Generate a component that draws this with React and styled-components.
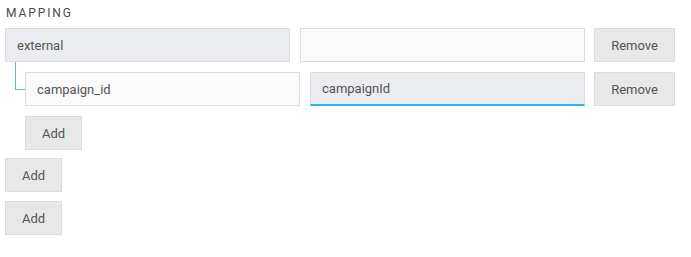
import React from 'react';
import styled, { createGlobalStyle } from 'styled-components';

const GlobalStyle = createGlobalStyle`
  body {
    margin: 0;
    background: #fff;
    font-family: Roboto, "Liberation Sans", Arial, sans-serif;
    color: #555;
  }
`;

const Page = styled.div`
  width: 670px;
  padding: 6px 0 0 5px;
`;

const Label = styled.div`
  font-size: 12px;
  line-height: 14px;
  font-weight: 400;
  letter-spacing: 1.9px;
  text-transform: uppercase;
  color: #4a4a4a;
  padding-left: 1px;
  margin-bottom: 8px;
`;

const List = styled.div`
  display: flex;
  flex-direction: column;
  gap: 10px;
`;

const Entry = styled.div`
  display: flex;
  flex-direction: column;
  gap: 10px;
`;

const Row = styled.div`
  display: flex;
  align-items: stretch;
`;

const Children = styled.div`
  display: flex;
  flex-direction: column;
  gap: 10px;
  padding-left: 20px;
`;

const Child = styled.div`
  position: relative;
`;

// tree connector from parent field down to the child field
const Connector = styled.span`
  position: absolute;
  left: -10px;
  top: -10px;
  width: 10px;
  height: 28px;
  border-left: 1px solid #6ab7b7;
  border-bottom: 1px solid #6ab7b7;
  box-sizing: border-box;
`;

const Field = styled.input`
  flex: 1;
  min-width: 0;
  height: 34px;
  box-sizing: border-box;
  margin: 0 10px 0 0;
  padding: 0 11px;
  font: 13px Roboto, "Liberation Sans", Arial, sans-serif;
  color: #555;
  background: ${(p) => (p.$filled ? '#ebecf0' : '#fafafa')};
  border: 1px solid #dcdcdc;
  border-bottom: ${(p) => (p.$active ? '2px solid #29b6f6' : '1px solid #dcdcdc')};
  border-radius: 0;
  outline: none;
  &:last-of-type {
    margin-right: 9px;
  }
`;

const Button = styled.button`
  width: ${(p) => p.$width || 57}px;
  height: 34px;
  box-sizing: border-box;
  padding: 0;
  font: 13px Roboto, "Liberation Sans", Arial, sans-serif;
  color: #555;
  background: #e8e8e8;
  border: 1px solid #dcdcdc;
  border-radius: 0;
  cursor: pointer;
  flex-shrink: 0;
  align-self: flex-start;
  margin-top: ${(p) => p.$top || 0}px;
`;

export default function App() {
  return (
    <>
      <GlobalStyle />
      <Page>
        <Label>Mapping</Label>
        <List>
          <Entry>
            <Row>
              <Field $filled defaultValue="external" />
              <Field defaultValue="" />
              <Button $width={81}>Remove</Button>
            </Row>
            <Children>
              <Child>
                <Connector />
                <Row>
                  <Field defaultValue="campaign_id" />
                  <Field $filled $active defaultValue="campaignId" />
                  <Button $width={81}>Remove</Button>
                </Row>
              </Child>
              <Button>Add</Button>
            </Children>
          </Entry>
          <Button $top={-2}>Add</Button>
          <Button $top={-1}>Add</Button>
        </List>
      </Page>
    </>
  );
}
